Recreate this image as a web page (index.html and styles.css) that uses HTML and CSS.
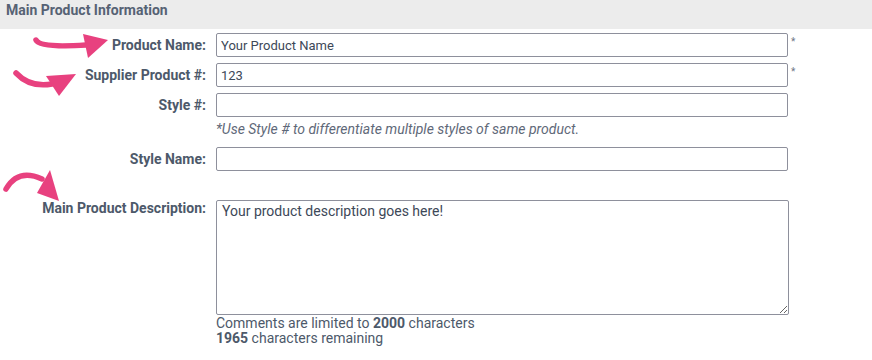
FILE: index.html
```html
<!DOCTYPE html>
<html lang="en">
<head>
    <meta charset="UTF-8">
    <meta name="viewport" content="width=device-width, initial-scale=1.0">
    <title>Main Product Information</title>
    <link rel="stylesheet" href="styles.css">
</head>
<body>
    <div class="section-header">Main Product Information</div>
    <form class="product-form">
        <div class="form-row">
            <label for="productName">Product Name:</label>
            <input type="text" id="productName" value="Your Product Name">
            <span class="required">*</span>
        </div>
        <div class="form-row">
            <label for="supplierNum">Supplier Product #:</label>
            <input type="text" id="supplierNum" value="123">
            <span class="required">*</span>
        </div>
        <div class="form-row">
            <label for="styleNum">Style #:</label>
            <input type="text" id="styleNum">
        </div>
        <p class="hint">*Use Style # to differentiate multiple styles of same product.</p>
        <div class="form-row">
            <label for="styleName">Style Name:</label>
            <input type="text" id="styleName">
        </div>
        <div class="form-row desc-row">
            <label for="description">Main Product Description:</label>
            <div class="desc-field">
                <textarea id="description">Your product description goes here!</textarea>
                <div class="counter">Comments are limited to <b>2000</b> characters</div>
                <div class="counter"><b>1965</b> characters remaining</div>
            </div>
        </div>
    </form>

    <!-- annotation arrows -->
    <svg class="arrows" width="872" height="360" viewBox="0 0 872 360">
        <g fill="none" stroke="#e8417f" stroke-width="5.5" stroke-linecap="round">
            <path d="M36 40 Q40 48 86 45"/>
            <path d="M16 73 Q30 88 52 84"/>
            <path d="M6 189 Q18 168 42 179"/>
        </g>
        <g fill="#e8417f">
            <polygon points="108,40 83,34 88,58"/>
            <polygon points="76,74 46,76 59,96"/>
            <polygon points="59,201 50,170 37,193"/>
        </g>
    </svg>
</body>
</html>
```

FILE: styles.css
```css
body {
    margin: 0;
    font-family: Roboto, "Liberation Sans", sans-serif;
    font-size: 14px;
    color: #4a5667;
    background: #fff;
    position: relative;
}
.section-header {
    height: 29px;
    box-sizing: border-box;
    padding: 2px 0 0 6px;
    line-height: 16px;
    background-color: #ececec;
    font-weight: 700;
    color: #566274;
}
.product-form {
    padding-top: 4px;
}
.form-row {
    display: grid;
    grid-template-columns: 206px 572px auto;
    column-gap: 10px;
    align-items: center;
    margin-bottom: 6px;
}
.form-row label {
    text-align: right;
    font-weight: 700;
    color: #4d596a;
}
.form-row input {
    height: 24px;
    box-sizing: border-box;
    border: 1px solid #8e909c;
    border-radius: 2px;
    padding: 0 4px;
    font-family: inherit;
    font-size: 13px;
    color: #3d4858;
    outline: none;
}
.required {
    align-self: start;
    margin-left: -7px;
    margin-top: 3px;
    font-size: 10px;
    color: #6e7684;
}
.hint {
    margin: -2px 0 10px 216px;
    font-style: italic;
    color: #5f6979;
    line-height: 16px;
}
.desc-row {
    align-items: start;
    margin-top: 29px;
}
.desc-field textarea {
    display: block;
    width: 573px;
    height: 115px;
    box-sizing: border-box;
    border: 1px solid #8e909c;
    border-radius: 2px;
    padding: 2px 5px;
    font-family: inherit;
    font-size: 14px;
    color: #3d4858;
    margin: 0 0 1px;
    outline: none;
}
.counter {
    line-height: 15px;
    color: #4d596a;
}
.arrows {
    position: absolute;
    top: 0;
    left: 0;
    pointer-events: none;
}
```
